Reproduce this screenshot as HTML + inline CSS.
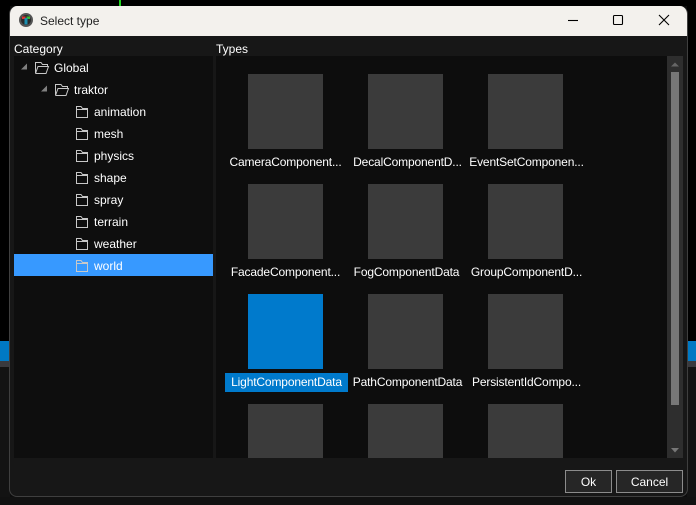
<!DOCTYPE html>
<html><head><meta charset="utf-8"><style>
html,body{margin:0;padding:0;background:#0d0d0d}
#r{position:relative;width:696px;height:505px;overflow:hidden;background:#0d0d0d;font:12px/16px "Liberation Sans",sans-serif;color:#fff}
#r div,#r span,#r svg{position:absolute}
.t{white-space:nowrap}
.tile{width:75px;height:75px;background:#3b3b3b}
.l{white-space:nowrap;width:123px;text-align:center;height:16px;letter-spacing:-.15px}
</style></head><body><div id="r">
<div style="left:0;top:0;width:10px;height:341px;background:#000"></div>
<div style="left:687px;top:0;width:9px;height:341px;background:#000"></div>
<div style="left:0;top:0;width:696px;height:6px;background:#000"></div>
<div style="left:119px;top:0;width:2px;height:6px;background:#1fd41f"></div>
<div style="left:0;top:341px;width:10px;height:20px;background:#0079c4"></div>
<div style="left:687px;top:341px;width:9px;height:20px;background:#0079c4"></div>
<div style="left:0;top:361px;width:10px;height:6px;background:#3a3a3e"></div>
<div style="left:687px;top:361px;width:9px;height:6px;background:#3a3a3e"></div>
<div style="left:0;top:367px;width:10px;height:138px;background:#131313"></div>
<div style="left:687px;top:367px;width:9px;height:138px;background:#131313"></div>
<div style="left:0;top:497px;width:696px;height:8px;background:#111"></div>

<div style="left:9px;top:6px;width:677px;height:490px;background:#171717;border:1px solid #3f3f3f;border-top:0;border-radius:8px;overflow:hidden">
<div style="left:0;top:0;width:677px;height:30px;background:#f3f1ed"></div>
</div>

<svg style="left:18px;top:12px" width="16" height="16" viewBox="0 0 16 16"><circle cx="8" cy="8" r="7" fill="#555"/><circle cx="8" cy="8" r="5" fill="#2a2a2a"/><rect x="4" y="4.500" width="3.500" height="2.500" fill="#d33"/><rect x="8.500" y="4.500" width="3.500" height="2.500" fill="#3b3"/><rect x="6.500" y="6" width="3" height="6.500" fill="#1b8fb0"/></svg>
<div class="t" style="left:40px;top:13px;color:#222">Select type</div>

<svg style="left:560px;top:10px" width="125" height="22" viewBox="0 0 125 22" fill="none" stroke="#000" stroke-width="1.100"><path d="M8 10.500H18"/><rect x="53.500" y="5.500" width="9" height="9" rx="1"/><path d="M99 5L109 15M109 5L99 15"/></svg>

<div class="t" style="left:14px;top:41px">Category</div>
<div class="t" style="left:216px;top:41px">Types</div>

<div style="left:14px;top:56px;width:199px;height:402px;background:#0e0e0e"></div>
<div style="left:216px;top:56px;width:451px;height:402px;background:#0d0d0d"></div>
<div style="left:667px;top:56px;width:16px;height:402px;background:#2e2e2e"></div>
<div style="left:671px;top:72px;width:8px;height:333px;background:#777"></div>
<svg style="left:667px;top:56px" width="16" height="402" viewBox="0 0 16 402"><path d="M4 10.500H12L8 6.500Z" fill="#666"/><path d="M4 392H12L8 396.500Z" fill="#777"/></svg>

<div style="left:14px;top:254px;width:199px;height:22px;background:#3799ff"></div>

<svg style="left:0;top:0" width="220" height="280" fill="none" stroke="#c8c8c8" stroke-width="1">
<path d="M21 69.500H27V63.500Z" fill="#808080" stroke="none"/>
<path d="M41 91.500H47V85.500Z" fill="#808080" stroke="none"/>
<path d="M35.500 73.500V62.500H41L42.500 64.500H47.500V66.500M35.500 73.500H46L48.500 66.500H38L35.500 73.500"/>
<path d="M55.500 95.500V84.500H61L62.500 86.500H67.500V88.500M55.500 95.500H66L68.500 88.500H58L55.500 95.500"/>
<path d="M76.500 117.500V106.500H81L82.500 108.500H87.500V117.500ZM76.500 109.500H87.500"/>
<path transform="translate(0,22)" d="M76.500 117.500V106.500H81L82.500 108.500H87.500V117.500ZM76.500 109.500H87.500"/>
<path transform="translate(0,44)" d="M76.500 117.500V106.500H81L82.500 108.500H87.500V117.500ZM76.500 109.500H87.500"/>
<path transform="translate(0,66)" d="M76.500 117.500V106.500H81L82.500 108.500H87.500V117.500ZM76.500 109.500H87.500"/>
<path transform="translate(0,88)" d="M76.500 117.500V106.500H81L82.500 108.500H87.500V117.500ZM76.500 109.500H87.500"/>
<path transform="translate(0,110)" d="M76.500 117.500V106.500H81L82.500 108.500H87.500V117.500ZM76.500 109.500H87.500"/>
<path transform="translate(0,132)" d="M76.500 117.500V106.500H81L82.500 108.500H87.500V117.500ZM76.500 109.500H87.500"/>
<path transform="translate(0,154)" d="M76.500 117.500V106.500H81L82.500 108.500H87.500V117.500ZM76.500 109.500H87.500"/>
</svg>

<div class="t" style="left:54px;top:60px">Global</div>
<div class="t" style="left:74px;top:82px">traktor</div>
<div class="t" style="left:94px;top:104px">animation</div>
<div class="t" style="left:94px;top:126px">mesh</div>
<div class="t" style="left:94px;top:148px">physics</div>
<div class="t" style="left:94px;top:170px">shape</div>
<div class="t" style="left:94px;top:192px">spray</div>
<div class="t" style="left:94px;top:214px">terrain</div>
<div class="t" style="left:94px;top:236px">weather</div>
<div class="t" style="left:94px;top:258px">world</div>

<div class="tile" style="left:248px;top:74px"></div><div class="tile" style="left:368px;top:74px"></div><div class="tile" style="left:488px;top:74px"></div>
<div class="tile" style="left:248px;top:184px"></div><div class="tile" style="left:368px;top:184px"></div><div class="tile" style="left:488px;top:184px"></div>
<div class="tile" style="left:248px;top:294px;background:#007acc"></div><div class="tile" style="left:368px;top:294px"></div><div class="tile" style="left:488px;top:294px"></div>
<div class="tile" style="left:248px;top:404px;height:54px"></div><div class="tile" style="left:368px;top:404px;height:54px"></div><div class="tile" style="left:488px;top:404px;height:54px"></div>

<div class="l" style="left:224px;top:154px">CameraComponent...</div>
<div class="l" style="left:346px;top:154px">DecalComponentD...</div>
<div class="l" style="left:465px;top:154px">EventSetComponen...</div>
<div class="l" style="left:224px;top:264px">FacadeComponent...</div>
<div class="l" style="left:345px;top:264px">FogComponentData</div>
<div class="l" style="left:465px;top:264px">GroupComponentD...</div>
<div style="left:225px;top:373px;width:123px;height:19px;background:#007acc"></div>
<div class="l" style="left:225px;top:374px">LightComponentData</div>
<div class="l" style="left:346px;top:374px">PathComponentData</div>
<div class="l" style="left:465px;top:374px">PersistentIdCompo...</div>

<div style="left:565px;top:470px;width:45px;height:21px;background:#262626;border:1px solid #8c8c8c"></div>
<div style="left:616px;top:470px;width:65px;height:21px;background:#262626;border:1px solid #8c8c8c"></div>
<div class="t" style="left:565px;top:474px;width:47px;text-align:center">Ok</div>
<div class="t" style="left:616px;top:474px;width:67px;text-align:center">Cancel</div>
</div></body></html>
